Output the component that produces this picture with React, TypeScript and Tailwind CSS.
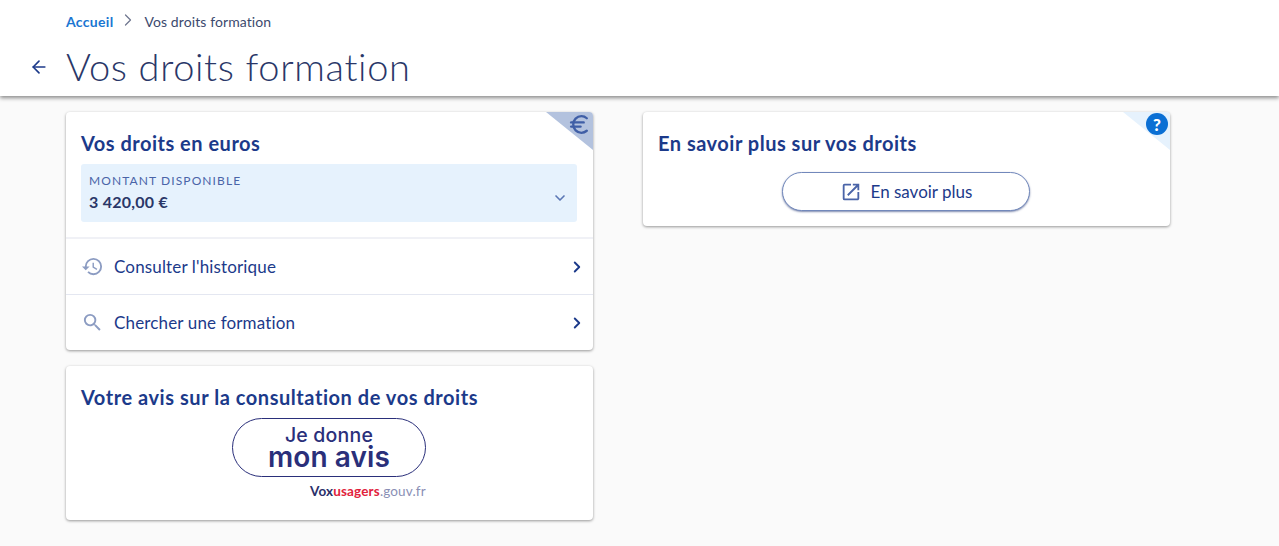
import { ArrowLeft, ChevronDown, ChevronRight, Euro } from 'lucide-react'
import { MdHistory, MdOpenInNew, MdSearch } from 'react-icons/md'

const font = { fontFamily: 'Lato, "Noto Sans", sans-serif' }

export default function App() {
  return (
    <div className="h-[546px] overflow-hidden bg-[#fafafa] text-[#1c3a8a]" style={font}>
      {/* Header */}
      <header className="relative z-10 h-[96px] bg-white shadow-[0_2px_4px_rgba(0,0,0,0.45)]">
        <nav className="flex items-center pl-[66px] pt-[10px] h-[33px] text-[14px] tracking-[0.1px]">
          <span className="font-bold text-[#1a76d2] tracking-[0.3px]">Accueil</span>
          <ChevronRight className="w-[20px] h-[20px] ml-[5px] mr-[6px] mb-[3px] text-[#70778f]" strokeWidth={1.5} />
          <span className="text-[#3c4a6e]">Vos droits formation</span>
        </nav>
        <div className="flex items-center pl-[29px] mt-[10px]">
          <ArrowLeft className="w-5 h-5 mt-[2px] text-[#1c3a8a] mr-[17px]" strokeWidth={2} />
          <h1 className="text-[38px] leading-[46px] font-light tracking-[0.65px] text-[#2a3768]">Vos droits formation</h1>
        </div>
      </header>

      <main className="grid grid-cols-[527px_527px] gap-x-[50px] pl-[66px] pt-[16px]">
        <div className="flex flex-col gap-[16px]">
          {/* Droits en euros */}
          <section className="relative h-[238px] rounded-[4px] bg-white shadow-[0_1px_3px_rgba(0,0,0,0.4)] overflow-hidden">
            <div className="absolute right-0 top-0 w-[47px] h-[38px] bg-[#b3c2de] [clip-path:polygon(0_0,100%_0,100%_100%)]" />
            <Euro className="absolute right-[1px] top-0 w-[25px] h-[25px] text-[#3f5ea6]" strokeWidth={2.25} />
            <h2 className="pl-[15px] pt-[18px] text-[20px] leading-[26px] font-bold tracking-[0.5px] text-[#1c3a8a]">Vos droits en euros</h2>
            <div className="relative ml-[15px] mr-[16px] mt-[8px] h-[58px] rounded-[3px] bg-[#e6f2fd] pl-[8px] pt-[9px]">
              <div className="text-[12px] leading-[16px] tracking-[1.1px] text-[#4a64a8]">MONTANT DISPONIBLE</div>
              <div className="mt-[3px] text-[16px] leading-[20px] font-bold tracking-[0.25px] text-[#2a3768]">3 420,00 €</div>
              <ChevronDown className="absolute right-[9px] top-[26px] w-[16px] h-[16px] text-[#5b77b5]" strokeWidth={2.5} />
            </div>
            <div className="mt-[15px] flex h-[57px] items-center border-t-2 border-[#f0f1f6] pl-[15px] pr-[7px]">
              <MdHistory className="w-[23px] h-[23px] text-[#8c9cc2] mr-[10px]" />
              <span className="flex-1 text-[17px] tracking-[0.15px]">Consulter l'historique</span>
              <ChevronRight className="w-[18px] h-[18px] text-[#1c3a8a]" strokeWidth={2.5} />
            </div>
            <div className="flex h-[56px] items-center border-t border-[#e4e7f1] pl-[15px] pr-[7px]">
              <MdSearch className="w-[23px] h-[23px] text-[#8c9cc2] mr-[10px]" />
              <span className="flex-1 text-[17px] tracking-[0.15px]">Chercher une formation</span>
              <ChevronRight className="w-[18px] h-[18px] text-[#1c3a8a]" strokeWidth={2.5} />
            </div>
          </section>

          {/* Avis */}
          <section className="h-[154px] rounded-[4px] bg-white shadow-[0_1px_3px_rgba(0,0,0,0.4)] flex flex-col">
            <h2 className="pl-[15px] pt-[18px] text-[20px] leading-[26px] font-bold tracking-[0.55px] text-[#1c3a8a]">Votre avis sur la consultation de vos droits</h2>
            <div className="ml-[166px] mt-[8px] flex h-[59px] w-[194px] flex-col items-center justify-center rounded-[30px] border border-[#2a2f7a] bg-white pt-[2px] text-[#2a2f7a]" style={{ fontFamily: 'Inter, sans-serif' }}>
              <span className="text-[19.5px] leading-[17px] font-medium tracking-[0.2px]">Je donne</span>
              <span className="text-[28px] leading-[26px] font-semibold tracking-[0.1px]">mon avis</span>
            </div>
            <div className="mt-[6px] pl-[244px] text-[13.5px] leading-[16px] font-bold tracking-[0.15px]">
              <span className="text-[#2a2f6a]">Vox</span>
              <span className="text-[#e1223c]">usagers</span>
              <span className="font-normal text-[#8a8fb5]">.gouv.fr</span>
            </div>
          </section>
        </div>

        {/* En savoir plus */}
        <section className="relative h-[114px] rounded-[4px] bg-white shadow-[0_1px_3px_rgba(0,0,0,0.4)] overflow-hidden">
          <div className="absolute right-0 top-0 w-[47px] h-[38px] bg-[#e6f2fd] [clip-path:polygon(0_0,100%_0,100%_100%)]" />
          <div className="absolute right-[2px] top-[1px] flex h-[22px] w-[22px] items-center justify-center rounded-full bg-[#0a6fd4] text-[17px] font-black leading-none text-white">?</div>
          <h2 className="pl-[15px] pt-[18px] text-[20px] leading-[26px] font-bold tracking-[0.5px] text-[#1c3a8a]">En savoir plus sur vos droits</h2>
          <div className="ml-[139px] mt-[16px] flex h-[39px] w-[248px] items-center justify-center gap-[9px] rounded-[20px] border border-[#7288bb] bg-white shadow-[0_1px_2px_rgba(40,60,120,0.6)]">
            <MdOpenInNew className="w-[22px] h-[22px] text-[#4a64a8]" />
            <span className="text-[17px] text-[#1c3a8a]">En savoir plus</span>
          </div>
        </section>
      </main>
    </div>
  )
}
